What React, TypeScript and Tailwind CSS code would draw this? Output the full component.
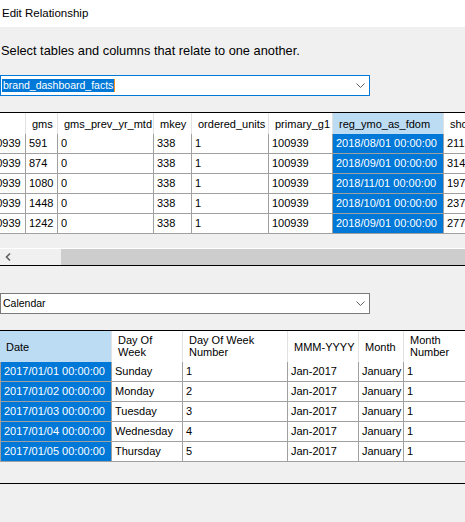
import React from 'react';

type Col = { lines: string[]; width: string; selected?: boolean };

const factCols: Col[] = [
  { lines: [''], width: 'w-[45px]' },
  { lines: ['gms'], width: 'w-[32px]' },
  { lines: ['gms_prev_yr_mtd'], width: 'w-[96px]' },
  { lines: ['mkey'], width: 'w-[38px]' },
  { lines: ['ordered_units'], width: 'w-[77px]' },
  { lines: ['primary_g1'], width: 'w-[64px]' },
  { lines: ['reg_ymo_as_fdom'], width: 'w-[111px]', selected: true },
  { lines: ['shopper_count'], width: 'w-[70px]' },
];

const factRows = [
  ['100939', '591', '0', '338', '1', '100939', '2018/08/01 00:00:00', '211'],
  ['100939', '874', '0', '338', '1', '100939', '2018/09/01 00:00:00', '314'],
  ['100939', '1080', '0', '338', '1', '100939', '2018/11/01 00:00:00', '197'],
  ['100939', '1448', '0', '338', '1', '100939', '2018/10/01 00:00:00', '237'],
  ['100939', '1242', '0', '338', '1', '100939', '2018/09/01 00:00:00', '277'],
];

const calendarCols: Col[] = [
  { lines: ['Date'], width: 'w-[112px]', selected: true },
  { lines: ['Day Of', 'Week'], width: 'w-[71px]' },
  { lines: ['Day Of Week', 'Number'], width: 'w-[105px]' },
  { lines: ['MMM-YYYY'], width: 'w-[71px]' },
  { lines: ['Month'], width: 'w-[45px]' },
  { lines: ['Month', 'Number'], width: 'w-[70px]' },
];

const calendarRows = [
  ['2017/01/01 00:00:00', 'Sunday', '1', 'Jan-2017', 'January', '1'],
  ['2017/01/02 00:00:00', 'Monday', '2', 'Jan-2017', 'January', '1'],
  ['2017/01/03 00:00:00', 'Tuesday', '3', 'Jan-2017', 'January', '1'],
  ['2017/01/04 00:00:00', 'Wednesday', '4', 'Jan-2017', 'January', '1'],
  ['2017/01/05 00:00:00', 'Thursday', '5', 'Jan-2017', 'January', '1'],
];

function Chevron() {
  return (
    <svg width="9" height="5" viewBox="0 0 9 5" className="shrink-0">
      <polyline points="0.5,0.5 4.5,4.5 8.5,0.5" fill="none" stroke="#5f5f5f" strokeWidth="1" />
    </svg>
  );
}

function HeaderRow({ cols, height }: { cols: Col[]; height: string }) {
  return (
    <div className={`flex ${height}`}>
      {cols.map((col, i) => (
        <div
          key={i}
          className={`${col.width} shrink-0 overflow-hidden whitespace-nowrap border-r border-[#e2e2e2] pl-[6px] flex flex-col ${
            col.lines.length > 1 ? 'justify-start pt-[3px]' : 'justify-center'
          } leading-[12px] ${col.selected ? 'bg-[#bcdcf4]' : 'bg-white'}`}
        >
          {col.lines.map((line) => (
            <span key={line}>{line}</span>
          ))}
        </div>
      ))}
    </div>
  );
}

function BodyRows({ cols, rows, leftBorder }: { cols: Col[]; rows: string[][]; leftBorder?: boolean }) {
  return (
    <>
      {rows.map((row, r) => (
        <div key={r} className="flex h-[20px]">
          {row.map((value, i) => (
            <div
              key={i}
              className={`${cols[i].width} shrink-0 overflow-hidden whitespace-nowrap border-r border-b border-[#a0a0a0] pl-[3px] flex items-center ${
                leftBorder && i === 0 ? 'border-l' : ''
              } ${cols[i].selected ? 'bg-[#0078d7] text-white' : 'bg-white text-black'}`}
            >
              {value}
            </div>
          ))}
        </div>
      ))}
    </>
  );
}

export default function App() {
  return (
    <div className="h-[522px] w-[465px] overflow-hidden bg-[#f0f0f0] font-['Liberation_Sans',Arial,sans-serif] text-black">
      <div className="flex h-[27px] items-center bg-white pl-[2px] text-[11.5px]">Edit Relationship</div>

      <p className="mt-[17px] pl-[1px] text-[12.8px] leading-[14px]">Select tables and columns that relate to one another.</p>

      <div className="mt-[17px] flex h-[21px] w-[370px] items-center justify-between border border-[#0078d7] bg-white pl-[1px] pr-[4px] text-[10.5px]">
        <div className="flex items-center">
          <span className="bg-[#0078d7] px-[1px] leading-[13px] text-white">brand_dashboard_facts</span>
          <span className="h-[13px] w-px bg-[#f7931e]" />
        </div>
        <Chevron />
      </div>

      <div className="mt-[16px] flex h-[154px] flex-col overflow-hidden border-y border-black text-[11px]">
        <div className="-ml-[19px]">
          <HeaderRow cols={factCols} height="h-[21px]" />
          <BodyRows cols={factCols} rows={factRows} />
        </div>
        <div className="flex-1" />
        <div className="flex h-[17px] border-t border-white">
          <div className="flex w-[61px] items-center pl-[5px]">
            <svg width="6" height="8" viewBox="0 0 6 8">
              <polyline points="5,0.5 1.5,4 5,7.5" fill="none" stroke="#606060" strokeWidth="1.6" />
            </svg>
          </div>
          <div className="flex-1 bg-[#cdcdcd]" />
        </div>
      </div>

      <div className="mt-[27px] flex h-[21px] w-[370px] items-center justify-between border border-[#7a7a7a] bg-white pl-[2px] pr-[4px] text-[10.5px]">
        <span>Calendar</span>
        <Chevron />
      </div>

      <div className="mt-[16px] flex h-[154px] flex-col overflow-hidden border-y border-black text-[11px]">
        <HeaderRow cols={calendarCols} height="h-[31px]" />
        <BodyRows cols={calendarCols} rows={calendarRows} leftBorder />
      </div>
    </div>
  );
}
